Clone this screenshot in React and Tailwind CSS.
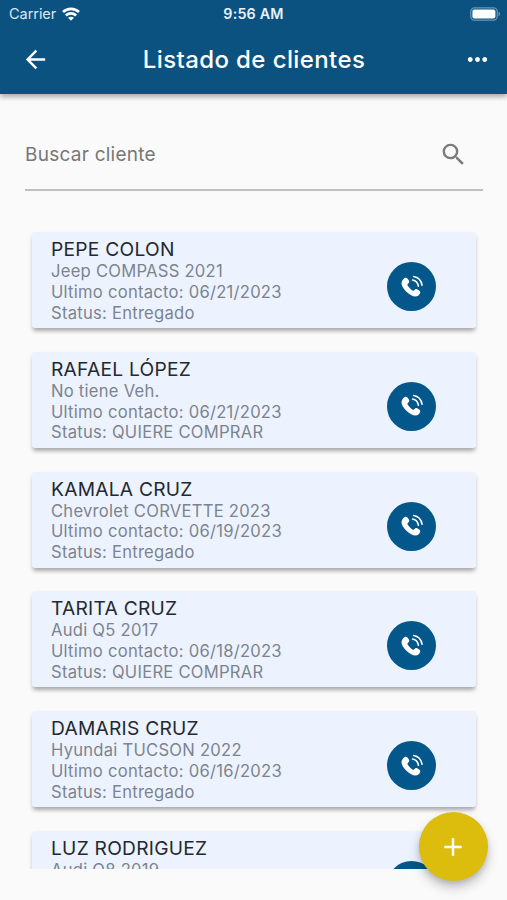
import React from 'react';
import { MdArrowBack, MdMoreHoriz, MdSearch, MdAdd } from 'react-icons/md';

const clients = [
  { name: 'PEPE COLON', vehicle: 'Jeep COMPASS 2021', date: '06/21/2023', status: 'Entregado' },
  { name: 'RAFAEL LÓPEZ', vehicle: 'No tiene Veh.', date: '06/21/2023', status: 'QUIERE COMPRAR' },
  { name: 'KAMALA CRUZ', vehicle: 'Chevrolet CORVETTE 2023', date: '06/19/2023', status: 'Entregado' },
  { name: 'TARITA CRUZ', vehicle: 'Audi Q5 2017', date: '06/18/2023', status: 'QUIERE COMPRAR' },
  { name: 'DAMARIS CRUZ', vehicle: 'Hyundai TUCSON 2022', date: '06/16/2023', status: 'Entregado' },
  { name: 'LUZ RODRIGUEZ', vehicle: 'Audi Q8 2019' },
];

function WifiIcon() {
  return (
    <svg width="18" height="14" viewBox="0 0 18 14" fill="none" stroke="white" strokeWidth="2.7">
      <path d="M1 5.1C5.4 0.9 12.6 0.9 17 5.1" />
      <path d="M3.9 8.4C6.8 5.7 11.2 5.7 14.1 8.4" />
      <path d="M9 13.8L6 10.8C7.6 9.3 10.4 9.3 12 10.8Z" fill="white" stroke="none" />
    </svg>
  );
}

function BatteryIcon() {
  return (
    <svg width="31" height="14" viewBox="0 0 31 14" fill="none">
      <rect x="0.8" y="0.8" width="26.4" height="12.4" rx="3.6" stroke="white" strokeOpacity="0.4" strokeWidth="1.2" />
      <rect x="2.4" y="2.4" width="23" height="9.2" rx="2" fill="white" />
      <path d="M28.6 4.8C30.2 5.4 30.2 8.6 28.6 9.2Z" fill="white" fillOpacity="0.5" />
    </svg>
  );
}

function PhoneIcon() {
  return (
    <svg width="24" height="24" viewBox="0 0 24 24" fill="none">
      <path
        d="M3.1 4.5C4.6 2.5 6.6 2.3 7.8 3.9L8.9 5.6C9.6 6.8 9.2 7.9 8 8.8C7.3 9.4 7.3 10 7.8 10.8C9 12.7 10.5 14.3 12.4 15.5C13.2 16 13.8 15.9 14.3 15.2C15.2 14.1 16.3 13.8 17.5 14.5L19.2 15.6C20.8 16.7 20.7 18.6 18.8 20.2C16.7 22 14 21.9 11.2 20.3C7.3 18.1 4.4 15.1 2.5 11.7C1 8.9 1.3 6.6 3.1 4.5Z"
        fill="white"
      />
      <path d="M12.6 5C15.7 5.6 17.9 7.9 18.4 11.1" stroke="white" strokeWidth="1.6" strokeLinecap="round" />
      <path d="M13.6 1.5C18.1 2.3 21.3 5.7 22 10.2" stroke="white" strokeWidth="1.6" strokeLinecap="round" />
    </svg>
  );
}

function ClientCard({ client }) {
  return (
    <div className="flex h-24 shrink-0 items-start justify-between rounded-[3px] bg-[#ecf3ff] pr-10 pl-[19px] shadow-[0_4px_4px_-1px_rgba(0,0,0,0.32),0_1px_4px_rgba(0,0,0,0.03)]">
      <div className="pt-[6px] text-[16.6px] leading-[20.75px] tracking-[0.25px] whitespace-nowrap text-[#7d838e]">
        <h2 className="text-[19.2px] leading-[23px] tracking-[0.25px] text-[#24282f]">{client.name}</h2>
        <p>{client.vehicle}</p>
        {client.date && <p>Ultimo contacto: {client.date}</p>}
        {client.status && <p>Status: {client.status}</p>}
      </div>
      <button className="mt-[30px] flex size-[49px] items-center justify-center rounded-full bg-[#03578b]">
        <PhoneIcon />
      </button>
    </div>
  );
}

function App() {
  return (
    <div className="relative flex h-[900px] w-[507px] flex-col overflow-hidden bg-[#fafafa] font-['Inter',sans-serif]">
      <header className="z-10 h-[94px] shrink-0 bg-[#0b5280] text-white shadow-[0_3px_5px_rgba(0,0,0,0.32)]">
        <div className="grid h-[27px] grid-cols-3 items-center pr-[6px] pl-[6px]">
          <div className="flex items-center gap-[6px] pl-[3px] text-[14.5px] tracking-[-0.05px] text-[#dce8f0]">
            <span>Carrier</span>
            <WifiIcon />
          </div>
          <span className="text-center text-[14.3px] font-semibold tracking-[0.2px] text-[#e8f1f7]">9:56 AM</span>
          <div className="flex justify-end">
            <BatteryIcon />
          </div>
        </div>
        <div className="flex h-[65px] items-center justify-between pr-[15px] pl-[21px]">
          <MdArrowBack className="size-[29px]" />
          <h1 className="mr-[5px] text-[24px] font-medium tracking-[0.4px]">Listado de clientes</h1>
          <MdMoreHoriz className="size-[29px]" />
        </div>
      </header>

      <div className="mr-6 ml-[25px] mt-[25px] flex h-[72px] shrink-0 items-center justify-between border-b-2 border-[#c0c0c0] pr-[15px]">
        <span className="pt-[2px] text-[19px] tracking-[0.25px] text-[#777777]">Buscar cliente</span>
        <MdSearch className="size-[29px] text-[#7b7b7b]" />
      </div>

      <main className="mt-[31px] flex h-[647px] shrink-0 flex-col gap-[23.75px] overflow-hidden pr-[31px] pl-8 pt-[10px]">
        {clients.map((client) => (
          <ClientCard key={client.name} client={client} />
        ))}
      </main>

      <button className="absolute top-[812px] left-[418.5px] z-20 flex size-[69px] items-center justify-center rounded-full bg-[#dcbc0c] text-white shadow-[0_7px_12px_rgba(0,0,0,0.2),0_3px_5px_rgba(0,0,0,0.12)]">
        <MdAdd className="size-[30px]" />
      </button>
    </div>
  );
}

export default App;
